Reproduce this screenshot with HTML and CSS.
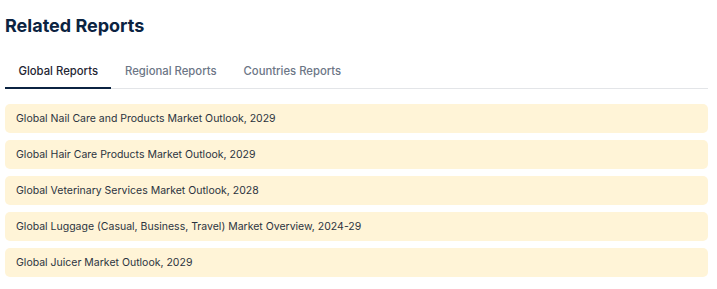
FILE: index.html
```html
<!DOCTYPE html>
<html lang="en">
<head>
    <meta charset="UTF-8">
    <meta name="viewport" content="width=device-width, initial-scale=1.0">
    <title>Related Reports</title>
    <link rel="stylesheet" href="styles.css">
</head>
<body>
    <div class="related">
        <h2>Related Reports</h2>

        <div class="tabs">
            <a href="#" class="tab active">Global Reports</a>
            <a href="#" class="tab">Regional Reports</a>
            <a href="#" class="tab">Countries Reports</a>
        </div>

        <ul class="report-list">
            <li><a href="#">Global Nail Care and Products Market Outlook, 2029</a></li>
            <li><a href="#">Global Hair Care Products Market Outlook, 2029</a></li>
            <li><a href="#">Global Veterinary Services Market Outlook, 2028</a></li>
            <li><a href="#">Global Luggage (Casual, Business, Travel) Market Overview, 2024-29</a></li>
            <li><a href="#">Global Juicer Market Outlook, 2029</a></li>
        </ul>
    </div>
</body>
</html>
```

FILE: styles.css
```css
/* Page */
body {
    margin: 0;
    padding: 0;
    background: #ffffff;
    font-family: 'Inter', 'Liberation Sans', sans-serif;
}

.related {
    width: 703px;
    padding: 14px 0 0 5px;
}

h2 {
    margin: 0;
    font-size: 18px;
    font-weight: 700;
    line-height: 24px;
    color: #0b2341;
}

/* Tabs */
.tabs {
    display: flex;
    margin-top: 21px;
    border-bottom: 1px solid #e3e5e8;
}

.tab {
    display: block;
    padding: 4px 13.5px 8px;
    font-size: 11.3px;
    font-weight: 500;
    line-height: 16px;
    color: #6c7686;
    text-decoration: none;
    border-bottom: 2px solid transparent;
    margin-bottom: -1px;
}

.tab.active {
    color: #1f2633;
    border-bottom-color: #0b2341;
}

/* Report list */
.report-list {
    list-style: none;
    margin: 15px 0 0;
    padding: 0;
    display: flex;
    flex-direction: column;
    gap: 7px;
}

.report-list li a {
    display: block;
    background: #fff4d7;
    border-radius: 5px;
    padding: 0 11px;
    height: 29px;
    line-height: 29px;
    font-size: 10.5px;
    color: #2b3340;
    text-decoration: none;
}
```
